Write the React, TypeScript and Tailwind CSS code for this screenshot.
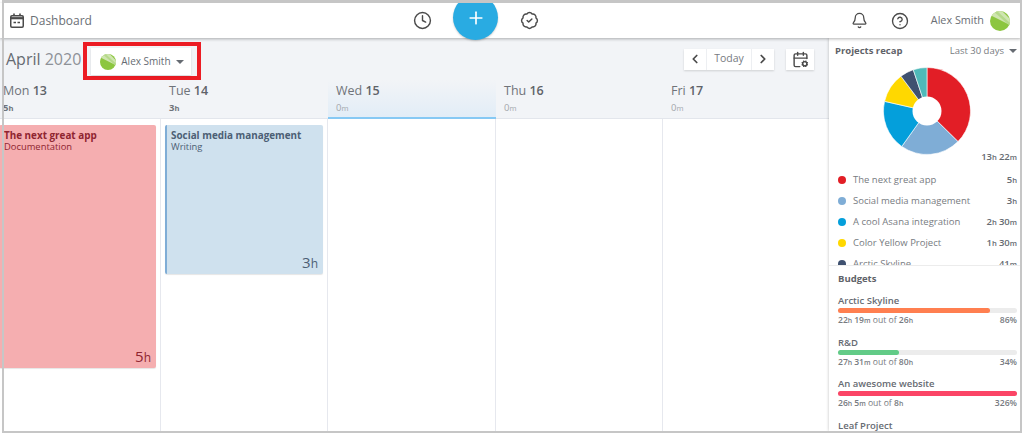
import React from 'react';
import { Bell, CalendarCog, ChevronLeft, ChevronRight, CircleHelp, Clock, BadgeCheck, Plus } from 'lucide-react';

const Num: React.FC<{ v: string }> = ({ v }) => (
  <>
    {v.split(' ').map((part, i) => (
      <span key={i} className={i > 0 ? 'ml-[2px]' : ''}>
        {part.slice(0, -1)}
        <span className="text-[0.8em]">{part.slice(-1)}</span>
      </span>
    ))}
  </>
);

const Avatar: React.FC<{ size: string }> = ({ size }) => (
  <svg viewBox="0 0 20 20" className={size}>
    <defs>
      <clipPath id="av">
        <circle cx="10" cy="10" r="10" />
      </clipPath>
    </defs>
    <g clipPath="url(#av)">
      <rect width="20" height="20" fill="#8cc63f" />
      <path d="M0 4 L4 0 L12 0 L20 8 L20 14 Z" fill="#cfe5b0" />
      <path d="M3 0 L7 0 L20 12 L20 15 Z" fill="#b5d98a" />
    </g>
  </svg>
);

const DashIcon: React.FC = () => (
  <svg viewBox="0 0 14 15" className="h-[15px] w-[14px] text-[#4a4a4a]" fill="none" stroke="currentColor">
    <rect x="0.75" y="2.75" width="12.5" height="11.5" rx="1.2" strokeWidth="1.5" />
    <path d="M1 5.2 H13" strokeWidth="2.2" />
    <path d="M4 0.5 V3 M10 0.5 V3" strokeWidth="1.6" />
    <path d="M3.5 9.5 H6 M7.5 9.5 H10" strokeWidth="1.4" />
  </svg>
);

const days = [
  { name: 'Mon', num: '13', total: '5h', width: 'w-[166px] -ml-[5px]' },
  { name: 'Tue', num: '14', total: '3h', width: 'w-[167px]' },
  { name: 'Wed', num: '15', total: '0m', width: 'w-[168px]', today: true },
  { name: 'Thu', num: '16', total: '0m', width: 'w-[167px]' },
  { name: 'Fri', num: '17', total: '0m', width: 'w-[167px]' },
];

const recap = [
  { name: 'The next great app', time: '5h', min: 300, color: '#e21e26' },
  { name: 'Social media management', time: '3h', min: 180, color: '#7fadd6' },
  { name: 'A cool Asana integration', time: '2h 30m', min: 150, color: '#049fdb' },
  { name: 'Color Yellow Project', time: '1h 30m', min: 90, color: '#ffd800' },
  { name: 'Arctic Skyline', time: '41m', min: 41, color: '#3f5170' },
  { name: 'Leaf', time: '41m', min: 41, color: '#4fb9b9' },
];

const budgets = [
  { name: 'Arctic Skyline', used: '22h 19m', of: '26h', pct: '86%', width: '85%', color: 'bg-[#ff7f50]' },
  { name: 'R&D', used: '27h 31m', of: '80h', pct: '34%', width: '34%', color: 'bg-[#62cb87]' },
  { name: 'An awesome website', used: '26h 5m', of: '8h', pct: '326%', width: '100%', color: 'bg-[#fb4566]' },
  { name: 'Leaf Project', used: '', of: '', pct: '', width: '100%', color: 'bg-[#fb4566]' },
];

const Pie: React.FC = () => {
  const total = recap.reduce((s, r) => s + r.min, 0);
  let acc = 0;
  const pt = (a: number, r: number) => {
    const t = (a / total) * Math.PI * 2;
    return `${44 + r * Math.sin(t)} ${44 - r * Math.cos(t)}`;
  };
  return (
    <svg viewBox="0 0 88 88" className="h-[88px] w-[88px]">
      {recap.map((r) => {
        const from = acc;
        acc += r.min;
        const large = r.min / total > 0.5 ? 1 : 0;
        return (
          <path
            key={r.name}
            d={`M44 44 L${pt(from, 43.5)} A43.5 43.5 0 ${large} 1 ${pt(acc, 43.5)} Z`}
            fill={r.color}
            stroke="#fff"
            strokeWidth="0.6"
          />
        );
      })}
      <circle cx="44" cy="44" r="14.5" fill="#fff" />
    </svg>
  );
};

const App: React.FC = () => {
  return (
    <div className="relative h-[434px] w-[1024px] overflow-hidden bg-white font-['Open_Sans',sans-serif] text-[#555b63]">
      <div className="flex h-[431px] w-[1021px] flex-col overflow-hidden">
        {/* Header */}
        <header className="relative z-10 mt-[3px] flex h-[35px] shrink-0 items-center bg-white shadow-[0_1px_3px_rgba(0,0,0,0.3)]">
          <div className="flex w-[413px] items-center pl-[10px]">
            <DashIcon />
            <span className="ml-[6px] text-[12px] text-[#6b6f75]">Dashboard</span>
          </div>
          <div className="flex items-center">
            <Clock size={19} strokeWidth={1.8} className="text-[#4a4a4a]" />
            <div className="-mt-[6px] ml-[21px] flex h-[45px] w-[45px] items-center justify-center rounded-full bg-[#29abe2] shadow-[0_1px_2px_rgba(0,0,0,0.2)]">
              <Plus size={20} strokeWidth={2} className="text-white" />
            </div>
            <BadgeCheck size={19} strokeWidth={1.8} className="ml-[22px] text-[#4a4a4a]" />
          </div>
          <div className="ml-auto flex items-center pr-[11px]">
            <Bell size={17} strokeWidth={1.8} className="text-[#4a4a4a]" />
            <CircleHelp size={18} strokeWidth={1.8} className="ml-[23px] text-[#4a4a4a]" />
            <span className="ml-[22px] text-[10.8px] text-[#6b6f75]">Alex Smith</span>
            <div className="ml-[6px]">
              <Avatar size="h-[20px] w-[20px]" />
            </div>
          </div>
        </header>

        <div className="flex min-h-0 flex-1">
          {/* Calendar */}
          <main className="flex w-[829px] shrink-0 flex-col overflow-hidden bg-white">
            <div className="bg-[#f2f4f7]">
              <div className="flex h-[42px] items-center pl-[6px]">
                <span className="text-[16px] text-[#666b72]">
                  April <span className="text-[#8d9197]">2020</span>
                </span>
                <div className="ml-[2px] mt-[4px] border-[4px] border-[#ec1c24] pb-[1px] pl-[4px] pr-[6px] pt-[2px]">
                  <div className="flex h-[27px] w-[100px] items-center bg-white pl-[9px] shadow-[0_1px_2px_rgba(0,0,0,0.12)]">
                    <Avatar size="h-[16px] w-[16px]" />
                    <span className="ml-[5px] text-[10px] text-[#666b72]">Alex Smith</span>
                    <span className="ml-[5px] h-0 w-0 border-x-[4px] border-t-[4px] border-x-transparent border-t-[#666b72]" />
                  </div>
                </div>
                <div className="ml-auto mr-[15px] flex items-center">
                  <div className="flex h-[21px] w-[90px] items-center divide-x divide-[#edeff2] bg-white shadow-[0_1px_2px_rgba(0,0,0,0.15)]">
                    <div className="flex h-full w-[23px] items-center justify-center">
                      <ChevronLeft size={14} strokeWidth={3} className="text-[#4a4a4a]" />
                    </div>
                    <div className="flex h-full w-[45px] items-center justify-center text-[10.5px] text-[#777b81]">Today</div>
                    <div className="flex h-full w-[22px] items-center justify-center">
                      <ChevronRight size={14} strokeWidth={3} className="text-[#4a4a4a]" />
                    </div>
                  </div>
                  <div className="ml-[12px] flex h-[21px] w-[28px] items-center justify-center bg-white shadow-[0_1px_2px_rgba(0,0,0,0.15)]">
                    <CalendarCog size={17} strokeWidth={2} className="text-[#4a4a4a]" />
                  </div>
                </div>
              </div>
              <div className="flex h-[39px]">
                {days.map((d) => (
                  <div
                    key={d.name}
                    className={`${d.width} shrink-0 pl-[8px] pt-[2px] ${d.today ? 'border-b-2 border-[#86c9f4] bg-gradient-to-b from-[#f2f4f7] to-[#e2edf7]' : 'border-b border-[#e3e6ec]'}`}
                  >
                    <div className="text-[12.5px] leading-[18px] text-[#6f7379]">
                      {d.name} <span className="font-semibold text-[#5f6369]">{d.num}</span>
                    </div>
                    <div className={`text-[9.5px] leading-[16px] ${d.total === '0m' ? 'text-[#a3a7ac]' : 'font-bold text-[#6f7379]'}`}>
                      <Num v={d.total} />
                    </div>
                  </div>
                ))}
              </div>
            </div>
            <div className="flex min-h-0 flex-1">
              {days.map((d) => (
                <div key={d.name} className={`${d.width} shrink-0 border-r border-[#e6e8ee] px-[4px] pt-[6px]`}>
                  {d.name === 'Mon' && (
                    <div className="flex h-[243px] flex-col rounded-[2px] bg-[#f5aeb0] pl-[5px] pr-[5px] pt-[3px] text-[#8f2530] shadow-[0_1px_1px_rgba(0,0,0,0.1)]">
                      <div className="text-[9.9px] font-bold leading-[14px]">The next great app</div>
                      <div className="-mt-[1px] text-[9.4px] leading-[11px]">Documentation</div>
                      <div className="mt-auto text-right text-[15px] leading-[20px]">
                        <Num v="5h" />
                      </div>
                    </div>
                  )}
                  {d.name === 'Tue' && (
                    <div className="flex h-[149px] flex-col rounded-[2px] border-l-2 border-[#7fadd6] bg-[#cfe1ee] pl-[4px] pr-[5px] pt-[3px] text-[#4c5f75] shadow-[0_1px_1px_rgba(0,0,0,0.1)]">
                      <div className="text-[9.9px] font-bold leading-[14px]">Social media management</div>
                      <div className="-mt-[1px] text-[9.4px] leading-[11px]">Writing</div>
                      <div className="mt-auto text-right text-[15px] leading-[20px]">
                        <Num v="3h" />
                      </div>
                    </div>
                  )}
                </div>
              ))}
            </div>
          </main>

          {/* Sidebar */}
          <aside className="flex min-w-0 flex-1 flex-col bg-white shadow-[0_0_3px_rgba(0,0,0,0.25)]">
            <div className="h-[228px] shrink-0 overflow-hidden border-b border-[#ececec] pl-[6px] pr-[4px]">
              <div className="flex items-center justify-between pt-[6px] text-[9.5px] leading-[14px]">
                <span className="font-bold text-[#5f6369]">Projects recap</span>
                <span className="flex items-center text-[#777b81]">
                  Last 30 days
                  <span className="ml-[5px] h-0 w-0 border-x-[4px] border-t-[4px] border-x-transparent border-t-[#666b72]" />
                </span>
              </div>
              <div className="mt-[9px] flex justify-center pl-[2px]">
                <Pie />
              </div>
              <div className="-mt-[4px] text-right text-[9.5px] font-semibold leading-[12px] text-[#666b72]">
                <Num v="13h 22m" />
              </div>
              <div className="mt-[10px] flex flex-col gap-[7px]">
                {recap.map((r) => (
                  <div key={r.name} className="flex h-[14px] items-center text-[9.5px] text-[#777b81]">
                    <span className="ml-[3px] h-[8px] w-[8px] rounded-full" style={{ backgroundColor: r.color }} />
                    <span className="ml-[7px]">{r.name}</span>
                    <span className="ml-auto font-semibold text-[#666b72]">
                      <Num v={r.time} />
                    </span>
                  </div>
                ))}
              </div>
            </div>
            <div className="min-h-0 flex-1 overflow-hidden pl-[9px] pr-[4px] pt-[6px]">
              <div className="text-[9.5px] font-bold leading-[14px] text-[#5f6369]">Budgets</div>
              <div className="mt-[8px] flex flex-col gap-[8.5px]">
                {budgets.map((b) => (
                  <div key={b.name}>
                    <div className="text-[9.5px] font-semibold leading-[13px] text-[#666b72]">{b.name}</div>
                    <div className="mt-[1px] h-[5px] rounded-full bg-[#ececec]">
                      <div className={`h-full rounded-full ${b.color}`} style={{ width: b.width }} />
                    </div>
                    {b.used && (
                      <div className="mt-[1px] flex justify-between text-[8.6px] leading-[12px] text-[#777b81]">
                        <span>
                          <span className="font-semibold"><Num v={b.used} /></span> out of <span className="font-semibold"><Num v={b.of} /></span>
                        </span>
                        <span className="font-semibold">{b.pct}</span>
                      </div>
                    )}
                  </div>
                ))}
              </div>
            </div>
          </aside>
        </div>
      </div>

      {/* screenshot frame drawn over the page */}
      <div className="pointer-events-none absolute left-[2px] top-0 z-20 h-[433px] w-[1020px] border-2 border-t-[3px] border-[#c6c6c6]" />
    </div>
  );
};

export default App;
